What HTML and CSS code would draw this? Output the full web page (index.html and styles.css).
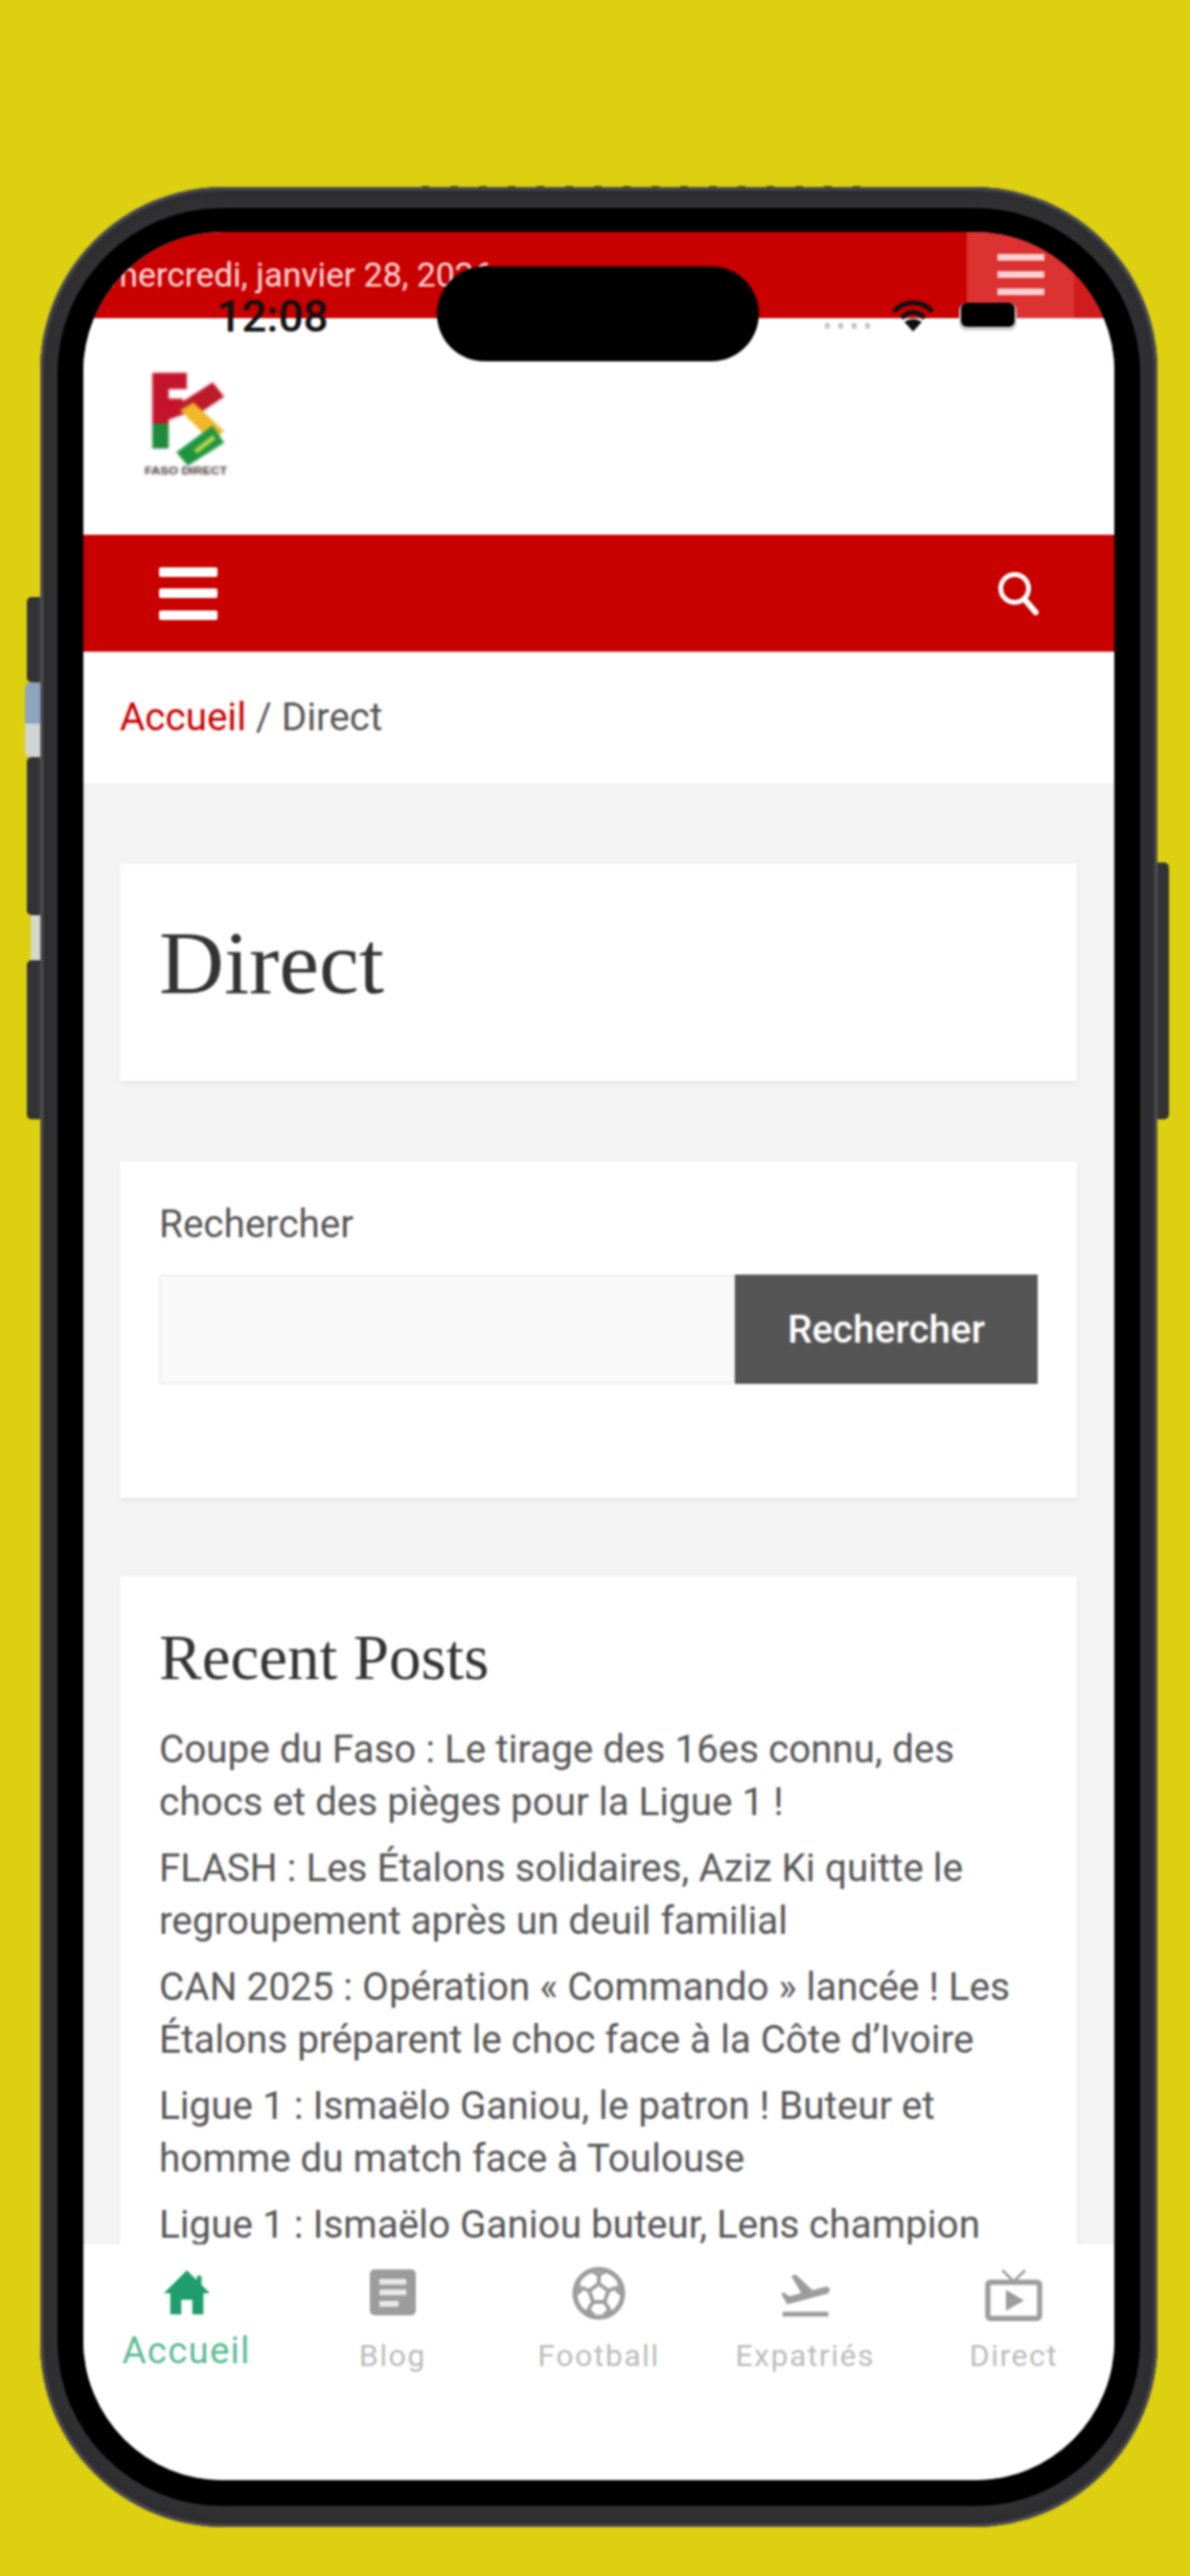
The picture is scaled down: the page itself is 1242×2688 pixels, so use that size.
FILE: index.html
```html
<!DOCTYPE html>
<html lang="fr">
<head>
<meta charset="utf-8">
<title>Direct</title>
<link rel="stylesheet" href="styles.css">
</head>
<body>
<div class="phone">
  <span class="btn btn-a"></span>
  <span class="patch patch-a"></span>
  <span class="btn btn-b"></span>
  <span class="patch patch-b"></span>
  <span class="btn btn-c"></span>
  <span class="btn btn-r"></span>
  <span class="edge-dash"></span>
  <div class="bezel">
    <div class="screen">
      <div class="topbar">
        <span class="date">mercredi, janvier 28, 2026</span>
        <span class="top-menu"><span class="burger burger-sm"><i></i><i></i><i></i></span></span>
      </div>
      <header class="header">
        <svg class="logo" viewBox="0 0 90 110" aria-label="Faso Directe">
          <path d="M9 3H45V20H26V30H40L48 44L26 52V56H9Z" fill="#c4142c"/>
          <path d="M9 56H26V82H9Z" fill="#1f8a3b"/>
          <path d="M36 36L72 13L84 28L48 52Z" fill="#bd1a2a"/>
          <path d="M38 42L52 34L84 64L70 74Z" fill="#f0b72a"/>
          <path d="M34 86L72 58L84 76L46 100Z" fill="#1f9440"/>
          <path d="M52 84L72 68L75 72L56 87Z" fill="#b9d84a"/>
          <path d="M26 56L40 56L54 68L34 82L26 82Z" fill="#fff"/>
          <text class="logo-text" x="1" y="109" textLength="86" lengthAdjust="spacingAndGlyphs">FASO DIRECT</text>
        </svg>
      </header>
      <nav class="nav">
        <span class="burger"><i></i><i></i><i></i></span>
        <svg class="search" viewBox="0 0 44 46"><circle cx="18" cy="18" r="14.500" fill="none" stroke="#fff" stroke-width="5"/><path d="M28 29L40 43" stroke="#fff" stroke-width="6" stroke-linecap="round"/></svg>
      </nav>
      <div class="crumbs"><a class="crumb-link">Accueil</a> / Direct</div>
      <main class="main">
        <section class="card card-title"><h1 class="page-title">Direct</h1></section>
        <section class="card card-search">
          <div class="search-label">Rechercher</div>
          <div class="search-row">
            <div class="search-input"></div>
            <div class="search-btn">Rechercher</div>
          </div>
        </section>
        <section class="card card-posts">
          <h2 class="posts-title">Recent Posts</h2>
          <ul class="posts">
            <li>Coupe du Faso : Le tirage des 16es connu, des chocs et des pièges pour la Ligue 1 !</li>
            <li>FLASH : Les Étalons solidaires, Aziz Ki quitte le regroupement après un deuil familial</li>
            <li>CAN 2025 : Opération « Commando » lancée ! Les Étalons préparent le choc face à la Côte d’Ivoire</li>
            <li>Ligue 1 : Ismaëlo Ganiou, le patron ! Buteur et homme du match face à Toulouse</li>
            <li>Ligue 1 : Ismaëlo Ganiou buteur, Lens champion</li>
          </ul>
        </section>
      </main>
      <footer class="tabs">
        <div class="tab tab-active">
          <svg class="ico ico-home" viewBox="0 0 50 48"><path d="M25 0L36 11V6H41V16L50 25H43V48H31V32H19V48H7V25H0Z" fill="#1f9d6c"/></svg>
          <span class="tab-label">Accueil</span>
        </div>
        <div class="tab">
          <svg class="ico ico-blog" viewBox="0 0 48 48"><rect width="48" height="48" rx="5" fill="#9c9c9c"/><path d="M10 10H38V16H10ZM10 21H38V27H10ZM10 33H30V39H10Z" fill="#e8e8e8"/></svg>
          <span class="tab-label">Blog</span>
        </div>
        <div class="tab">
          <svg class="ico ico-ball" viewBox="0 0 56 56"><circle cx="28" cy="28" r="25" fill="none" stroke="#9c9c9c" stroke-width="5"/><path d="M28 18L38 25.500L34 37H22L18 25.500Z" fill="none" stroke="#9c9c9c" stroke-width="4"/><path d="M28 18V10M38 25.500L46 22M34 37L39 45M22 37L17 45M18 25.500L10 22" stroke="#9c9c9c" stroke-width="4"/><path d="M19 6L37 6L28 11ZM48 16L52 32L45 26ZM44 46L30 52L37 44ZM12 46L26 52L19 44ZM8 16L4 32L11 26Z" fill="#9c9c9c"/></svg>
          <span class="tab-label">Football</span>
        </div>
        <div class="tab">
          <svg class="ico ico-plane" viewBox="1 3 21.500 18.200"><path fill="#9c9c9c" d="M2.500 19h19v2h-19v-2zm19.570-9.360c-.21-.8-1.040-1.280-1.840-1.060L14.920 10l-6.900-6.430-1.930.51 4.140 7.170-4.970 1.330-1.970-1.540-1.450.39 1.820 3.160.77 1.330 1.600-.43 5.310-1.420 4.350-1.160L21 11.490c.81-.23 1.280-1.050 1.070-1.850z"/></svg>
          <span class="tab-label">Expatriés</span>
        </div>
        <div class="tab tab-last">
          <svg class="ico ico-tv" viewBox="1 2 22 20"><path fill="#9c9c9c" d="M9 10v8l7-4zm12-4h-7.580l3.290-3.290L16 2l-4 3.990L8 2l-.71.71L10.580 6H3c-1.100 0-2 .89-2 2v12c0 1.100.9 2 2 2h18c1.100 0 2-.9 2-2V8c0-1.110-.9-2-2-2zm0 14H3V8h18v12z"/></svg>
          <span class="tab-label">Direct</span>
        </div>
      </footer>
      <span class="time">12:08</span>
      <span class="island"></span>
      <span class="signal"><i></i><i></i><i></i><i></i></span>
      <svg class="wifi" viewBox="0 0 46 34"><path d="M3 13C14 1 32 1 43 13" fill="none" stroke="#111" stroke-width="5"/><path d="M11 20C18 12 28 12 35 20" fill="none" stroke="#111" stroke-width="5"/><path d="M14 24L23 34L32 24C27 20 19 20 14 24Z" fill="#111"/></svg>
      <span class="battery"></span>
    </div>
  </div>
</div>
</body>
</html>
```

FILE: styles.css
```css
* { box-sizing: border-box; }
html, body { margin: 0; height: 100%; }
body {
  background: #ddd010;
  padding: 195px 0 0 42px;
  font-family: Roboto, "Liberation Sans", sans-serif;
  overflow: hidden;
}
.phone {
  position: relative;
  width: 1166px;
  height: 2442px;
  padding: 22px 18px;
  background: #323234;
  border-radius: 192px;
  box-shadow: inset 0 0 0 1px #606064, inset 0 0 0 4px #434347, inset 0 0 14px 8px #2c2c2e;
  filter: blur(1.1px);
}
.bezel {
  height: 100%;
  padding: 25px 27px 27px;
  background: #000;
  border-radius: 172px;
}
.screen {
  position: relative;
  height: 100%;
  display: flex;
  flex-direction: column;
  background: #fff;
  border-radius: 146px;
  overflow: hidden;
}

.btn { position: absolute; background: #333335; }
.btn-a { left: -14px; top: 428px; width: 14px; height: 89px; border-radius: 5px 0 0 5px; }
.btn-b { left: -14px; top: 595px; width: 14px; height: 165px; border-radius: 5px 0 0 5px; }
.btn-c { left: -14px; top: 807px; width: 14px; height: 166px; border-radius: 5px 0 0 5px; }
.btn-r { right: -12px; top: 705px; width: 12px; height: 268px; border-radius: 0 5px 5px 0; }
.patch { position: absolute; }
.patch-a { left: -16px; top: 517px; width: 16px; height: 78px; background: linear-gradient(#8ea3bf 55%, #cfd4d6 55%); border-radius: 6px 0 0 6px; }
.patch-b { left: -10px; top: 760px; width: 10px; height: 47px; background: #d6d8cc; }
.edge-dash {
  position: absolute;
  left: 398px;
  top: -1px;
  width: 480px;
  height: 2px;
  background: repeating-linear-gradient(90deg, #55501c 0 8px, transparent 8px 30px);
}

.topbar {
  flex: none;
  height: 90px;
  display: flex;
  align-items: center;
  justify-content: space-between;
  background: #c80000;
}
.date {
  margin-left: 26px;
  font-size: 35.300px;
  color: #ffdcdc;
  white-space: nowrap;
}
.top-menu {
  align-self: stretch;
  width: 154px;
  padding: 23px 0 0 32px;
  background: linear-gradient(90deg, #dc3232 73%, #d01c1c 73%);
}
.burger { display: flex; flex-direction: column; justify-content: space-between; width: 61px; height: 55px; }
.burger i { display: block; height: 10px; background: #fff; border-radius: 2px; }
.burger-sm { width: 49px; height: 43px; }
.burger-sm i { height: 7px; background: #fbd0d0; border-radius: 0; }

.header { flex: none; height: 226px; padding: 53px 0 0 63px; background: #fff; }
.logo { display: block; width: 90px; height: 112px; filter: blur(1.2px); }
.logo-text { font: 700 11px "Liberation Sans", sans-serif; fill: #3a282c; }

.nav {
  flex: none;
  height: 122px;
  display: flex;
  align-items: center;
  justify-content: space-between;
  padding: 0 78px 0 79px;
  background: #c80000;
}
.search { width: 44px; height: 46px; }

.crumbs {
  flex: none;
  height: 137px;
  padding-left: 38px;
  display: flex;
  align-items: center;
  gap: 0.25em;
  font-size: 40.400px;
  color: #555;
  background: #fff;
}
.crumb-link { color: #c80000; }

.main {
  flex: 1;
  min-height: 0;
  overflow: hidden;
  padding: 84px 39px 0 38px;
  background: #f3f3f3;
}
.card {
  background: #fff;
  padding: 0 41px;
  box-shadow: 0 2px 5px rgba(0, 0, 0, 0.07);
}
.card-title { height: 227px; margin-bottom: 84px; display: flex; align-items: center; }
.page-title {
  margin: -21px 0 0;
  font: 400 94px "Liberation Serif", serif;
  color: #333;
}
.card-search { height: 351px; margin-bottom: 82px; padding-top: 44px; }
.search-label { height: 74px; font-size: 40.400px; line-height: 44px; color: #555; }
.search-row { display: flex; height: 114px; }
.search-input { flex: 1; background: #f9f9f9; border: 2px solid #eee; }
.search-btn {
  width: 316px;
  display: flex;
  align-items: center;
  justify-content: center;
  background: #555;
  color: #fff;
  font-size: 40.500px;
  font-weight: 500;
}
.card-posts { padding-top: 46px; padding-bottom: 40px; }
.posts-title {
  margin: 0 0 31px;
  font: 400 67px/76px "Liberation Serif", serif;
  color: #333;
}
.posts { list-style: none; margin: 0; padding: 0; }
.posts li {
  margin-bottom: 14px;
  font-size: 40.400px;
  line-height: 55px;
  color: #555;
}

.tabs {
  flex: none;
  height: 246px;
  display: grid;
  grid-template-columns: repeat(5, 1fr);
  background: #fff;
  position: relative;
}
.tab { position: relative; display: flex; flex-direction: column; align-items: center; padding-top: 26px; }
.tab-last { padding-left: 5px; }
.ico { display: block; height: 48px; width: 48px; }
.ico-ball { width: 56px; height: 56px; margin-top: -3px; }
.ico-plane { width: 54px; height: 46px; margin-top: 4px; }
.ico-tv { width: 60px; height: 54px; }
.tab-label { position: absolute; top: 98px; font-size: 32px; line-height: 36px; letter-spacing: 1.5px; color: #bbb; white-space: nowrap; }
.tab-active .tab-label { top: 93px; font-size: 38.500px; color: #5cb996; letter-spacing: 1.2px; }

.time {
  position: absolute;
  left: 139px;
  top: 65px;
  font: 500 46px/46px Roboto, sans-serif;
  color: #111;
}
.island {
  position: absolute;
  left: 369px;
  top: 36px;
  width: 336px;
  height: 99px;
  background: #000;
  border-radius: 50px;
}
.signal { position: absolute; left: 774px; top: 95px; display: flex; gap: 9px; }
.signal i { width: 5px; height: 6px; background: #c4c4c4; border-radius: 1px; }
.wifi { position: absolute; left: 843px; top: 70px; width: 46px; height: 34px; }
.battery {
  position: absolute;
  left: 916px;
  top: 74px;
  width: 56px;
  height: 25px;
  background: #000;
  border-radius: 6px;
  box-shadow: 0 2px 0 2px #cfcfcf;
}
```
